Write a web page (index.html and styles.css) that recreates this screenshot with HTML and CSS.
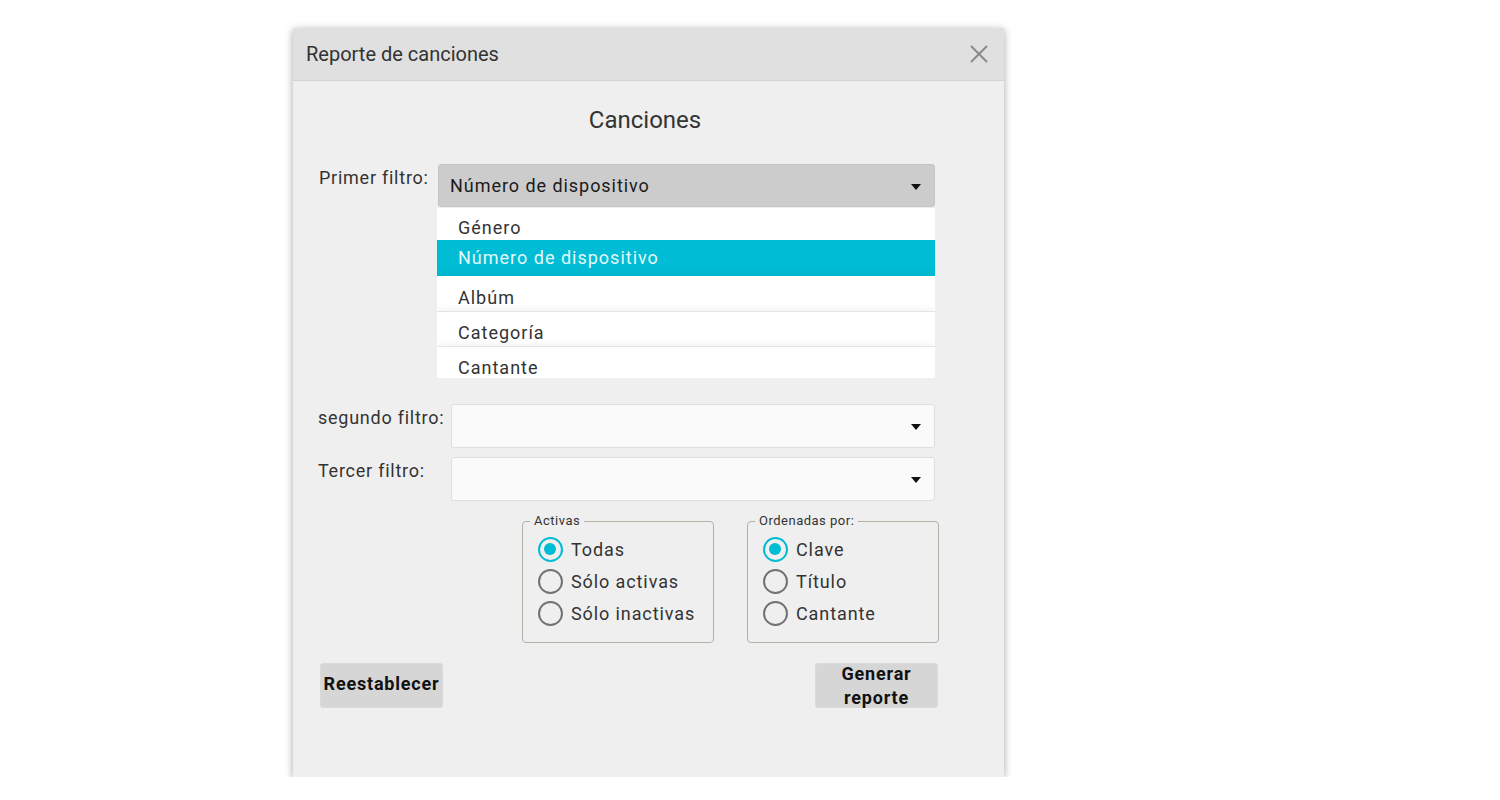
FILE: index.html
```html
<!DOCTYPE html>
<html lang="es">
<head>
<meta charset="utf-8">
<title>Reporte de canciones</title>
<link rel="stylesheet" href="styles.css">
</head>
<body>
<div class="dialog">
  <div class="header">
    <span class="title">Reporte de canciones</span>
    <span class="close" aria-label="Cerrar">
      <svg width="20" height="20" viewBox="0 0 20 20"><path d="M2 2 L18 18 M18 2 L2 18" stroke="#8a8a8a" stroke-width="2" fill="none"/></svg>
    </span>
  </div>
  <div class="body">
    <h2 class="heading">Canciones</h2>

    <div class="row first">
      <label class="lbl lbl-first">Primer filtro:</label>
      <div class="select-wrap">
        <div class="select open"><span>Número de dispositivo</span><span class="caret"></span></div>
        <ul class="menu">
          <li class="item item-top">Género</li>
          <li class="item item-sel">Número de dispositivo</li>
          <li class="item item-sh">Albúm</li>
          <li class="item item-sh sep">Categoría</li>
          <li class="item item-sh sep">Cantante</li>
        </ul>
      </div>
    </div>

    <div class="grid-rows">
      <label class="lbl">segundo filtro:</label>
      <div class="select"><span></span><span class="caret"></span></div>
      <label class="lbl">Tercer filtro:</label>
      <div class="select"><span></span><span class="caret"></span></div>
    </div>

    <div class="groups">
      <fieldset class="group">
        <legend>Activas</legend>
        <div class="radio"><span class="dot on"></span><span>Todas</span></div>
        <div class="radio"><span class="dot"></span><span>Sólo activas</span></div>
        <div class="radio"><span class="dot"></span><span>Sólo inactivas</span></div>
      </fieldset>
      <fieldset class="group">
        <legend>Ordenadas por:</legend>
        <div class="radio"><span class="dot on"></span><span>Clave</span></div>
        <div class="radio"><span class="dot"></span><span>Título</span></div>
        <div class="radio"><span class="dot"></span><span>Cantante</span></div>
      </fieldset>
    </div>

    <div class="actions">
      <button class="btn">Reestablecer</button>
      <button class="btn btn-two"><span class="btn-lines">Generar<br>reporte</span></button>
    </div>
  </div>
</div>
</body>
</html>
```

FILE: styles.css
```css
* { box-sizing: border-box; }
html, body { margin: 0; padding: 0; background: #ffffff; }
body { font-family: Roboto, "Liberation Sans", Arial, sans-serif; color: #333; }

.dialog {
  margin: 28px 0 0 293px;
  width: 711px;
  height: 749px;
  background: #efefef;
  box-shadow: 0 2px 8px rgba(0,0,0,0.35);
  display: flex;
  flex-direction: column;
}

.header {
  height: 53px;
  background: #e0e0e0;
  border-bottom: 1px solid #d4d4d4;
  display: flex;
  align-items: center;
  justify-content: space-between;
  padding: 0 15px 0 13px;
}
.title { font-size: 20px; color: #333; }
.close { display: flex; width: 20px; height: 20px; }

.body {
  flex: 1;
  padding: 0 69px 0 25px;
  display: flex;
  flex-direction: column;
}

.heading {
  margin: 23px 0 28px 0;
  font-size: 24px;
  line-height: 32px;
  font-weight: 400;
  text-align: center;
  color: #333;
  padding-left: 37px;
}

.lbl { font-size: 18px; line-height: 28px; color: #333; letter-spacing: 0.75px; }

.row.first { display: flex; align-items: flex-start; height: 43px; margin-bottom: 197px; }
.lbl-first { width: 120px; padding-left: 1px; }

.select-wrap { flex: 1; position: relative; }

.select {
  height: 44px;
  background: #fafafa;
  border: 1px solid #dedede;
  border-radius: 3px;
  display: flex;
  align-items: center;
  justify-content: space-between;
  padding: 0 13px 0 11px;
  font-size: 18px;
  letter-spacing: 0.95px;
  color: #1a1a1a;
}
.select.open { height: 43px; background: #cccccc; border-color: #c4c4c4; }
.caret {
  width: 0; height: 0;
  border-left: 5px solid transparent;
  border-right: 5px solid transparent;
  border-top: 6px solid #111;
  margin-top: 2px;
}

.menu {
  position: absolute;
  left: -1px;
  right: 0;
  top: 44px;
  height: 170px;
  margin: 0;
  padding: 0;
  list-style: none;
  overflow: hidden;
}
.item {
  background: #ffffff;
  font-size: 18px;
  color: #333;
  padding-left: 21px;
  line-height: 20px;
  letter-spacing: 1px;
}
.item-top { height: 32px; padding-top: 10px; }
.item-sel { height: 36px; padding-top: 8px; background: #00bcd4; color: #e3f8fb; }
.item-sh { height: 35px; padding-top: 12px; box-shadow: 0 0 10px rgba(0,0,0,0.07); }
.item.sep { border-top: 1px solid #e4e4e4; padding-top: 11px; }

.grid-rows {
  display: grid;
  grid-template-columns: 133px 1fr;
  row-gap: 9px;
  align-items: start;
}

.groups {
  display: flex;
  gap: 33px;
  margin: 12px -4px 0 204px;
}
.group {
  width: 193px;
  height: 130px;
  margin: 0;
  border: 1px solid #b3b0a6;
  border-radius: 4px;
  padding: 4px 8px 0 15px;
}
.group legend {
  font-size: 13px;
  line-height: 16px;
  color: #333;
  letter-spacing: 0.5px;
  padding: 0 4px;
  margin-left: -8px;
}
.radio {
  height: 32px;
  display: flex;
  align-items: center;
  gap: 8px;
  font-size: 18px;
  color: #333;
  letter-spacing: 0.9px;
  white-space: nowrap;
}
.dot {
  width: 25px;
  height: 25px;
  border-radius: 50%;
  border: 2.5px solid #727272;
  flex: none;
  position: relative;
}
.dot.on { border-color: #00bcd4; }
.dot.on::after {
  content: "";
  position: absolute;
  left: 4px; top: 4px;
  width: 12px; height: 12px;
  border-radius: 50%;
  background: #00bcd4;
}

.actions {
  display: flex;
  justify-content: space-between;
  margin: 20px -3px 0 2px;
}
.btn {
  width: 123px;
  height: 45px;
  background: #d6d6d6;
  border: 1px solid #dadada;
  border-radius: 3px;
  font-family: Roboto, "Liberation Sans", Arial, sans-serif;
  font-size: 18px;
  font-weight: 700;
  letter-spacing: 0.8px;
  line-height: 24px;
  color: #111;
  padding: 0 0 4px 0;
}
.btn-two { padding: 0; display: flex; flex-direction: column; justify-content: flex-start; align-items: center; overflow: visible; }
.btn-lines { display: block; margin-top: -2px; }
```
